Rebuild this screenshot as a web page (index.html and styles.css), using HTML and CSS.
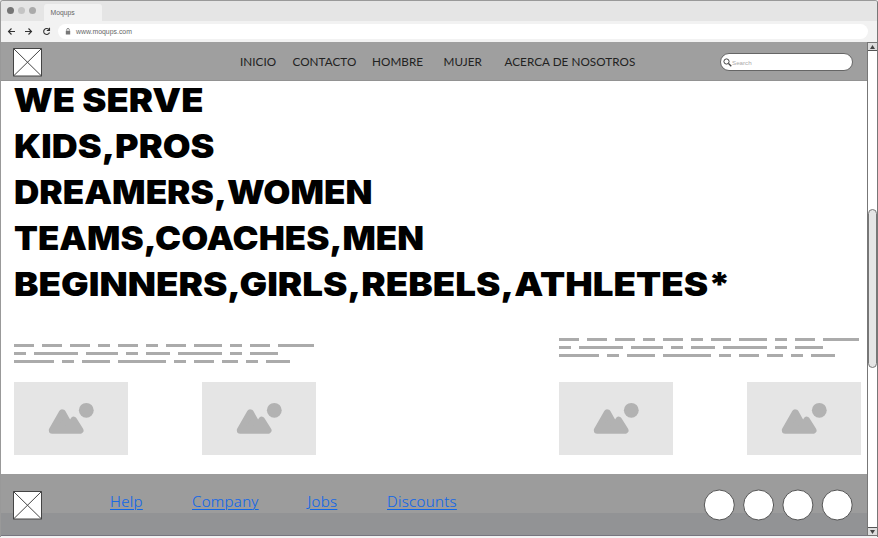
FILE: index.html
```
<!DOCTYPE html>
<html lang="es">
<head>
<meta charset="utf-8">
<title>Moqups</title>
<link rel="stylesheet" href="styles.css">
</head>
<body>
<svg class="defs" aria-hidden="true">
  <symbol id="box" viewBox="0 0 30 30"><path fill="#fff" stroke="#444" d="M1.500 1.500h28v27.500H1.500zM1.500 1.500l28 27.500M29.500 1.500L1.500 29"/></symbol>
  <symbol id="picture" viewBox="0 0 114 73"><path fill="#b2b2b2" stroke="#b2b2b2" stroke-width="7" stroke-linejoin="round" d="M38.300 48.300L48.300 30.800L56 44.500L59.700 38.300L66 48.300Z"/><circle cx="72.300" cy="28.300" r="7.400" fill="#b2b2b2"/></symbol>
</svg>
<div class="window">
  <div class="tabs"><i class="dot dark"></i><i class="dot"></i><i class="dot mid"></i><span class="tab">Moqups</span></div>
  <div class="toolbar">
    <svg class="controls" viewBox="0 0 50 12" fill="none" stroke="#333" stroke-width="1.100"><path d="M8 5.500H1.500M4.500 2.500L1.500 5.500L4.500 8.500M18 5.500H24.500M21.500 2.500L24.500 5.500L21.500 8.500M42 3.600A3 3 0 1 0 42.500 6.500M42.500 1.800V4.500H39.800"/></svg>
    <div class="address"><svg class="lock" viewBox="0 0 6 8"><path fill="#777" d="M.500 3h5v4.500h-5z"/><path d="M1.500 3V2a1.500 1.500 0 0 1 3 0v1" fill="none" stroke="#777"/></svg><span>www.moqups.com</span></div>
  </div>
  <div class="view">
    <div class="page">
      <header>
        <svg class="logo"><use href="#box"/></svg>
        <nav><a class="n1">INICIO</a><a class="n2">CONTACTO</a><a class="n3">HOMBRE</a><a class="n4">MUJER</a><a class="n5">ACERCA DE NOSOTROS</a></nav>
        <div class="search"><svg viewBox="0 0 9 9" fill="none" stroke="#444"><circle cx="3.500" cy="3.500" r="2.600"/><path d="M5.500 5.500L8.300 8.300" stroke-width="1.300"/></svg><span>Search</span></div>
      </header>
      <main>
        <h1><svg class="headline" viewBox="0 0 740 235">
          <text x="13.500" y="31" textLength="190" lengthAdjust="spacingAndGlyphs">WE SERVE</text>
          <text x="14" y="77" textLength="200.500" lengthAdjust="spacingAndGlyphs">KIDS,PROS</text>
          <text x="14" y="123" textLength="358.500" lengthAdjust="spacingAndGlyphs">DREAMERS,WOMEN</text>
          <text x="14" y="169" textLength="410" lengthAdjust="spacingAndGlyphs">TEAMS,COACHES,MEN</text>
          <text x="14" y="215" textLength="716.500" lengthAdjust="spacingAndGlyphs">BEGINNERS,GIRLS,REBELS,ATHLETES*</text>
        </svg></h1>
        <div class="features">
          <section class="left">
            <div class="lines">
              <p><i class="w5"></i><i class="w5"></i><i class="w5"></i><i class="w3"></i><i class="w5"></i><i class="w3"></i><i class="w5"></i><i class="w7"></i><i class="w3"></i><i class="w5"></i><i class="w9"></i></p>
              <p><i class="w3"></i><i class="w11"></i><i class="w8"></i><i class="w3"></i><i class="w6"></i><i class="w11"></i><i class="w3"></i><i class="w7"></i></p>
              <p><i class="w10"></i><i class="w3"></i><i class="w7"></i><i class="w12"></i><i class="w3"></i><i class="w5"></i><i class="w4"></i><i class="w3"></i><i class="w6"></i></p>
            </div>
            <div class="pictures"><svg><use href="#picture"/></svg><svg><use href="#picture"/></svg></div>
          </section>
          <section class="right">
            <div class="lines">
              <p><i class="w5"></i><i class="w5"></i><i class="w5"></i><i class="w3"></i><i class="w5"></i><i class="w3"></i><i class="w5"></i><i class="w7"></i><i class="w3"></i><i class="w5"></i><i class="w9"></i></p>
              <p><i class="w3"></i><i class="w11"></i><i class="w8"></i><i class="w3"></i><i class="w6"></i><i class="w11"></i><i class="w3"></i><i class="w7"></i></p>
              <p><i class="w10"></i><i class="w3"></i><i class="w7"></i><i class="w12"></i><i class="w3"></i><i class="w5"></i><i class="w4"></i><i class="w3"></i><i class="w6"></i></p>
            </div>
            <div class="pictures"><svg><use href="#picture"/></svg><svg><use href="#picture"/></svg></div>
          </section>
        </div>
      </main>
      <footer>
        <svg class="logo"><use href="#box"/></svg>
        <div class="links"><a class="f1" href="#">Help</a><a class="f2" href="#">Company</a><a class="f3" href="#">Jobs</a><a class="f4" href="#">Discounts</a></div>
        <svg class="social" viewBox="0 0 150 32" fill="#fff" stroke="#555"><circle cx="16.300" cy="16" r="15"/><circle cx="55.600" cy="16" r="15"/><circle cx="94.900" cy="16" r="15"/><circle cx="134.200" cy="16" r="15"/></svg>
      </footer>
    </div>
    <div class="scrollbar">
      <div class="arrow"><svg viewBox="0 0 5 4"><path d="M2.500 0L5 4H0z"/></svg></div>
      <div class="thumb"></div>
      <div class="arrow"><svg viewBox="0 0 5 4"><path d="M0 0H5L2.500 4z"/></svg></div>
    </div>
  </div>
</div>
</body>
</html>
```
FILE: styles.css
```
* { box-sizing: border-box; }
body { margin: 0; background: #f4f4f4; font-family: "Liberation Sans", sans-serif; overflow: hidden; }
svg { display: block; flex: none; }
.defs { width: 0; height: 0; position: absolute; }
.window { width: 878px; height: 537px; border: 1px solid #999; border-right-color: #777; border-bottom: 0; border-radius: 3px 3px 0 0; background: #f2f2f2; overflow: hidden; }
.tabs { height: 20px; background: #e5e5e5; display: flex; padding-left: 6px; }
.dot { width: 7px; height: 7px; border-radius: 50%; background: #c4c4c4; margin: 6px 4px 0 0; }
.dot.dark { background: #757575; }
.dot.mid { background: #aaa; }
.tab { width: 58px; height: 17px; margin: 3px 0 0 4px; padding: 4px 0 0 6.500px; border-radius: 3px 3px 0 0; background: #f2f2f2; color: #666; font-size: 6.800px; line-height: 9px; }
.toolbar { height: 21px; display: flex; align-items: center; padding: 0 9px 0 6px; }
.controls { width: 50px; height: 12px; }
.address { flex: 1; height: 15px; margin-left: 1px; padding-left: 7px; border-radius: 8px; background: #fff; display: flex; align-items: center; font-size: 6.900px; line-height: 9px; color: #666; }
.lock { width: 6px; height: 7px; margin: -1px 5px 0 0; }
.view { display: flex; height: 494px; }
.page { width: 866px; flex: none; background: #fff; border-bottom: 1px solid #77767f; }
header { height: 39px; background: #9f9f9f; border-bottom: 1px solid #929292; display: flex; align-items: flex-start; }
.logo { width: 30px; height: 30px; margin: 5px 0 0 11px; }
nav { width: 480px; margin: 10.400px 0 0 198px; display: flex; font: 11.700px/18px Lato, sans-serif; color: #222; white-space: nowrap; letter-spacing: .05px; }
.n1 { width: 52.500px; } .n2 { width: 79.500px; } .n3 { width: 71.500px; } .n4 { width: 61px; }
.search { width: 133px; height: 18px; margin: 11px 0 0; padding-left: 2px; border: 1px solid #666; border-radius: 9px; background: #fff; display: flex; align-items: center; font-size: 6.200px; color: #aaa; }
.search svg { width: 9px; height: 9px; }
h1 { margin: 0; }
.headline { width: 740px; height: 235px; margin-left: -1px; font: 900 33px Inter, "Liberation Sans", sans-serif; fill: #000; }
.features { display: flex; height: 158px; padding-left: 13px; }
.left { width: 544.700px; padding-top: 28px; }
.right { padding-top: 22px; }
.lines { height: 38px; }
.right .lines { height: 44px; }
.lines p { margin: 0 0 5px; height: 3px; display: flex; gap: 8px; }
.lines i { height: 3px; background: #ababab; }
.w3 { width: 12px; } .w4 { width: 16px; } .w5 { width: 20px; } .w6 { width: 24px; } .w7 { width: 28px; }
.w8 { width: 32px; } .w9 { width: 36px; } .w10 { width: 40px; } .w11 { width: 44px; } .w12 { width: 48px; }
.pictures { display: flex; gap: 74px; }
.pictures svg { width: 114px; height: 73px; background: #e5e5e5; }
footer { height: 61px; background: linear-gradient(#9c9c9c 39px, #929395 39px); display: flex; align-items: flex-start; }
footer .logo { margin-top: 16px; }
.links { width: 593px; padding: 15px 0 0 68px; display: flex; font: 300 15px/24px "Noto Sans", "Open Sans", sans-serif; letter-spacing: .3px; }
.links a { color: #0f66e8; text-decoration-thickness: 1px; text-underline-offset: 2px; -webkit-text-stroke: .1px #0f66e8; }
.f1 { width: 82px; } .f2 { width: 115.500px; } .f3 { width: 79.500px; }
.social { width: 150px; height: 32px; margin: 15px 0 0 68px; }
.scrollbar { width: 10px; background: #fff; border: 1px solid #777; border-right: 0; display: flex; flex-direction: column; justify-content: space-between; }
.arrow { height: 8px; background: #ddd; display: flex; align-items: center; justify-content: center; border-bottom: 1px solid #555; }
.arrow:last-child { border-bottom: 0; border-top: 1px solid #555; }
.arrow svg { width: 5px; height: 4px; fill: #444; }
.thumb { height: 159px; margin-bottom: 1px; border: 1px solid #777; border-radius: 5px; background: #e5e5e5; }
```
